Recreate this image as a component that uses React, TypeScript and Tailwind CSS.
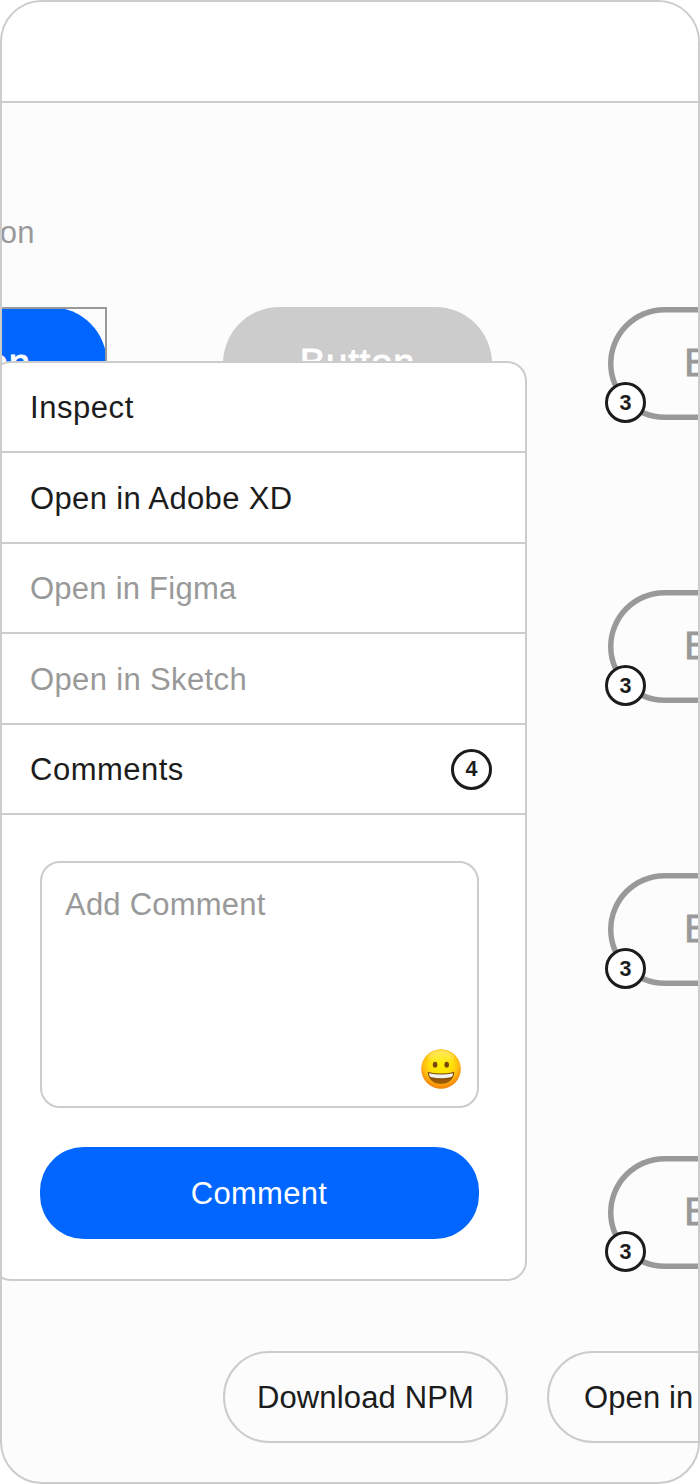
import type { ReactNode } from "react";

function Badge({ count, className = "" }: { count: number; className?: string }) {
  return (
    <span
      className={`flex size-[41px] items-center justify-center rounded-full border-3 border-[#1c1c1c] bg-white pt-0.5 text-[21.5px] leading-none font-bold text-[#1c1c1c] ${className}`}
    >
      {count}
    </span>
  );
}

function ButtonLabel({ className = "" }: { className?: string }) {
  return (
    <span className={`text-[38.5px] leading-none tracking-[0.7px] [-webkit-text-stroke:0.9px_currentColor] ${className}`}>
      Button
    </span>
  );
}

function OutlineButton() {
  return (
    <div className="relative flex h-[113px] w-[270px] shrink-0 items-center justify-center rounded-full text-[#999] shadow-[inset_0_0_0_5.5px_#999]">
      <ButtonLabel className="mr-0.5" />
      <Badge count={3} className="absolute -bottom-[3px] -left-[3px]" />
    </div>
  );
}

function MenuRow({ children, className = "" }: { children: ReactNode; className?: string }) {
  return (
    <div className={`flex items-center justify-between border-b-2 border-[#ccc] pr-[33px] pl-[37px] ${className}`}>
      {children}
    </div>
  );
}

function Smiley() {
  return (
    <svg viewBox="0 0 40 40" className="size-10">
      <defs>
        <linearGradient id="rim" x1="0" y1="0" x2="0" y2="1">
          <stop offset="0" stopColor="#fcc21f" />
          <stop offset="0.5" stopColor="#fb9d18" />
          <stop offset="1" stopColor="#f08205" />
        </linearGradient>
        <radialGradient id="face" cx="0.5" cy="0.38" r="0.6">
          <stop offset="0" stopColor="#fff000" />
          <stop offset="0.5" stopColor="#ffe008" />
          <stop offset="0.76" stopColor="#ffbe10" />
          <stop offset="1" stopColor="#f98a0c" />
        </radialGradient>
        <linearGradient id="shine" x1="0" y1="0" x2="0" y2="1">
          <stop offset="0" stopColor="#fff" stopOpacity="0.35" />
          <stop offset="1" stopColor="#fff" stopOpacity="0" />
        </linearGradient>
        <linearGradient id="mouth" x1="0" y1="0" x2="0" y2="1">
          <stop offset="0" stopColor="#6d3a04" />
          <stop offset="1" stopColor="#a66306" />
        </linearGradient>
      </defs>
      <circle cx="20" cy="20" r="19.8" fill="url(#rim)" />
      <circle cx="20" cy="19.8" r="19" fill="url(#face)" />
      <ellipse cx="20" cy="8.5" rx="13" ry="7" fill="url(#shine)" />
      <ellipse cx="14.1" cy="15.7" rx="2.3" ry="2.9" fill="#7a470b" />
      <ellipse cx="25.7" cy="15.7" rx="2.3" ry="2.9" fill="#7a470b" />
      <path d="M6.8 23 Q20 26 33.2 23 C33 30.5 27.5 35 20 35 S7 30.5 6.8 23Z" fill="url(#mouth)" />
      <path d="M8 24.3 Q20 26.7 32 24.3 Q32 27.8 29.6 28.3 Q20 30 10.4 28.3 Q8 27.8 8 24.3Z" fill="#f2f2f2" />
    </svg>
  );
}

function ContextMenu() {
  return (
    <div className="absolute top-[359px] -left-[11px] flex h-[920px] w-[536px] flex-col rounded-[20px] border-2 border-[#ccc] bg-white">
      <MenuRow className="h-[90px]">
        <span className="pt-[2px] tracking-[0.55px]">Inspect</span>
      </MenuRow>
      <MenuRow className="h-[91px]">
        <span className="pt-[2px] tracking-[0.36px]">Open in Adobe XD</span>
      </MenuRow>
      <MenuRow className="h-[90px] text-[#999]">
        <span className="pt-[2px] tracking-[0.24px]">Open in Figma</span>
      </MenuRow>
      <MenuRow className="h-[91px] text-[#999]">
        <span className="pt-[3px] tracking-[0.36px]">Open in Sketch</span>
      </MenuRow>
      <MenuRow className="h-[90px]">
        <span className="pt-[2px] tracking-[0.5px]">Comments</span>
        <Badge count={4} />
      </MenuRow>
      <div className="flex flex-col pt-[46px] pr-[46px] pl-[47px]">
        <div className="flex h-[247px] flex-col justify-between rounded-[20px] border-2 border-[#ccc] pt-[22px] pr-4 pb-[17px] pl-[23px] text-[#999]">
          <span className="tracking-[0.22px]">Add Comment</span>
          <div className="flex justify-end">
            <Smiley />
          </div>
        </div>
        <button className="mt-[39px] h-[92px] rounded-[44px] bg-[#06f] pt-[2px] pr-px tracking-[0.3px] text-white">
          Comment
        </button>
      </div>
    </div>
  );
}

export default function App() {
  return (
    <div className="relative flex h-[1484px] w-[700px] flex-col overflow-hidden rounded-[42px] border-2 border-[#ccc] bg-[#fcfcfc] font-['Liberation_Sans',Arial,sans-serif] text-[31px] leading-[40px] whitespace-nowrap text-[#1c1c1c] antialiased">
      <header className="h-[101px] shrink-0 border-b-2 border-[#ccc] bg-white" />
      <main className="flex h-[1248px] shrink-0 flex-col">
        <div className="flex h-[204px] items-start pt-[110px]">
          <span className="-ml-[103px] w-[136px] text-right tracking-[0.4px] text-[#999]">Button</span>
        </div>
        <div className="-ml-[165px] flex items-start gap-[116px]">
          <div className="relative flex h-[113px] w-[270px] shrink-0 items-center justify-center rounded-full bg-[#06f] text-white">
            <ButtonLabel className="ml-0.5" />
            <span className="absolute inset-0 border-2 border-[#999]" />
          </div>
          <div className="flex h-[113px] w-[269px] shrink-0 items-center justify-center rounded-full bg-[#ccc] text-white">
            <ButtonLabel />
          </div>
          <div className="flex shrink-0 flex-col gap-[170px]">
            <OutlineButton />
            <OutlineButton />
            <OutlineButton />
            <OutlineButton />
          </div>
        </div>
      </main>
      <footer className="ml-[221px] flex shrink-0 gap-[39px]">
        <button className="h-[92px] w-[285px] shrink-0 rounded-full border-2 border-[#ccc] pt-[2px] tracking-[0.15px]">
          Download NPM
        </button>
        <button className="h-[92px] shrink-0 rounded-full border-2 border-[#ccc] px-[35px] pt-[2px] tracking-[0.1px]">
          Open in Adobe XD
        </button>
      </footer>
      <ContextMenu />
    </div>
  );
}
